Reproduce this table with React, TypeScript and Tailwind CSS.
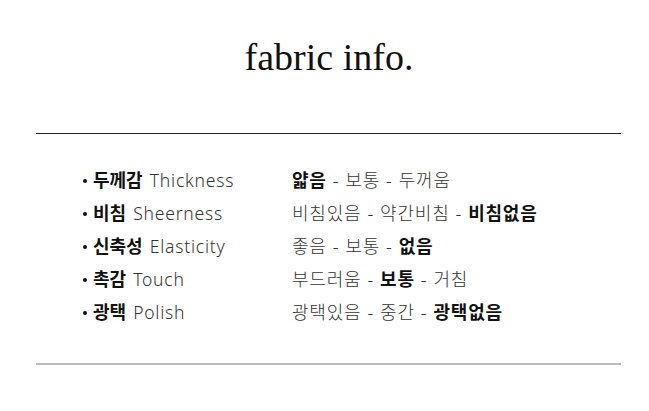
import React from 'react';

type Part = { text: string; bold?: boolean };

interface FabricRow {
  ko: string;
  en: string;
  scale: Part[];
}

const rows: FabricRow[] = [
  { ko: '두께감', en: 'Thickness', scale: [{ text: '얇음', bold: true }, { text: '보통' }, { text: '두꺼움' }] },
  { ko: '비침', en: 'Sheerness', scale: [{ text: '비침있음' }, { text: '약간비침' }, { text: '비침없음', bold: true }] },
  { ko: '신축성', en: 'Elasticity', scale: [{ text: '좋음' }, { text: '보통' }, { text: '없음', bold: true }] },
  { ko: '촉감', en: 'Touch', scale: [{ text: '부드러움' }, { text: '보통', bold: true }, { text: '거침' }] },
  { ko: '광택', en: 'Polish', scale: [{ text: '광택있음' }, { text: '중간' }, { text: '광택없음', bold: true }] },
];

const sans = "font-['Noto_Sans','Noto_Sans_CJK_KR',sans-serif]";

const App: React.FC = () => {
  return (
    <div className="w-[649px] h-[411px] bg-white overflow-hidden">
      <h1 className="pt-[37px] text-center pl-[9px] font-['Liberation_Serif',serif] text-[38px] leading-[40px] text-[#111]">
        fabric info.
      </h1>

      <div className="ml-[36px] w-[585px] mt-[56px] border-t-[1.5px] border-[#222]" />

      <div className={`pl-[83px] pt-[30px] pb-[34px] flex flex-col ${sans}`}>
        {rows.map((row) => (
          <div key={row.ko} className="flex items-center h-[33px] text-[18px]">
            <div className="w-[209px] flex items-center shrink-0">
              <span className="w-1 h-1 rounded-full bg-[#111] mr-[6px]" />
              <span className="font-bold text-[#111]">{row.ko}</span>
              <span className="ml-[7px] font-light text-[17.5px] text-[#333] tracking-[0.8px]">{row.en}</span>
            </div>
            <div className="flex items-center text-[#333] font-light tracking-[0.8px]">
              {row.scale.map((p, i) => (
                <React.Fragment key={p.text + i}>
                  {i > 0 && <span className="mx-[6px]">-</span>}
                  <span className={p.bold ? 'font-bold text-[#111]' : ''}>{p.text}</span>
                </React.Fragment>
              ))}
            </div>
          </div>
        ))}
      </div>

      <div className="ml-[36px] w-[585px] border-t-[2px] border-[#bbb]" />
    </div>
  );
};

export default App;
